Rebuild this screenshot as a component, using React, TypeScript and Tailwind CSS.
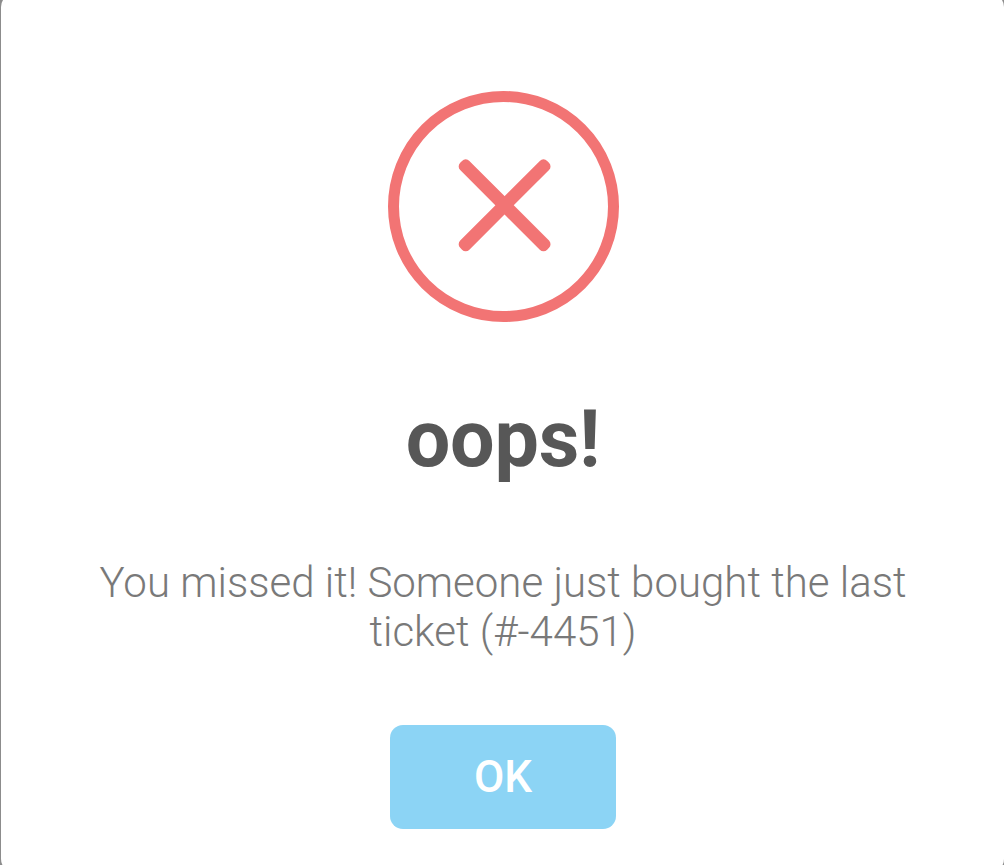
const ErrorIcon = () => (
  <svg className="ml-0.5 block h-[231px] w-[231px] shrink-0" viewBox="0 0 231 231">
    <circle cx="115.5" cy="115.5" r="110" fill="none" stroke="#f27474" strokeWidth="11" />
    <g transform="translate(116.6 114.3)" fill="#f27474">
      <rect x="-61.5" y="-6.5" width="123" height="13" rx="5.2" transform="rotate(45)" />
      <rect x="-61.5" y="-6.5" width="123" height="13" rx="5.2" transform="rotate(-45)" />
    </g>
  </svg>
);

const App = () => {
  return (
    <div className="h-[865px] w-[1004px] overflow-hidden bg-[#8c8c8c] pl-px font-[Roboto,sans-serif]">
      <div className="-mt-[6px] flex h-[878px] w-full flex-col items-center rounded-[13px] bg-white pt-[97px]">
        <ErrorIcon />
        <h2 className="mt-[65px] ml-px text-[79px] leading-[104px] font-bold tracking-[-0.2px] text-[#575757]">
          oops!
        </h2>
        <p className="mt-[67px] ml-px w-[840px] text-center text-[42px] leading-[49px] font-light text-[#797979]">
          You missed it! Someone just bought the last ticket (#-4451)
        </p>
        <button className="mt-[69px] h-[104px] w-[226px] rounded-[13px] bg-[#8cd4f5] pl-px text-[44px] font-medium text-white">
          OK
        </button>
      </div>
    </div>
  );
};

export default App;
